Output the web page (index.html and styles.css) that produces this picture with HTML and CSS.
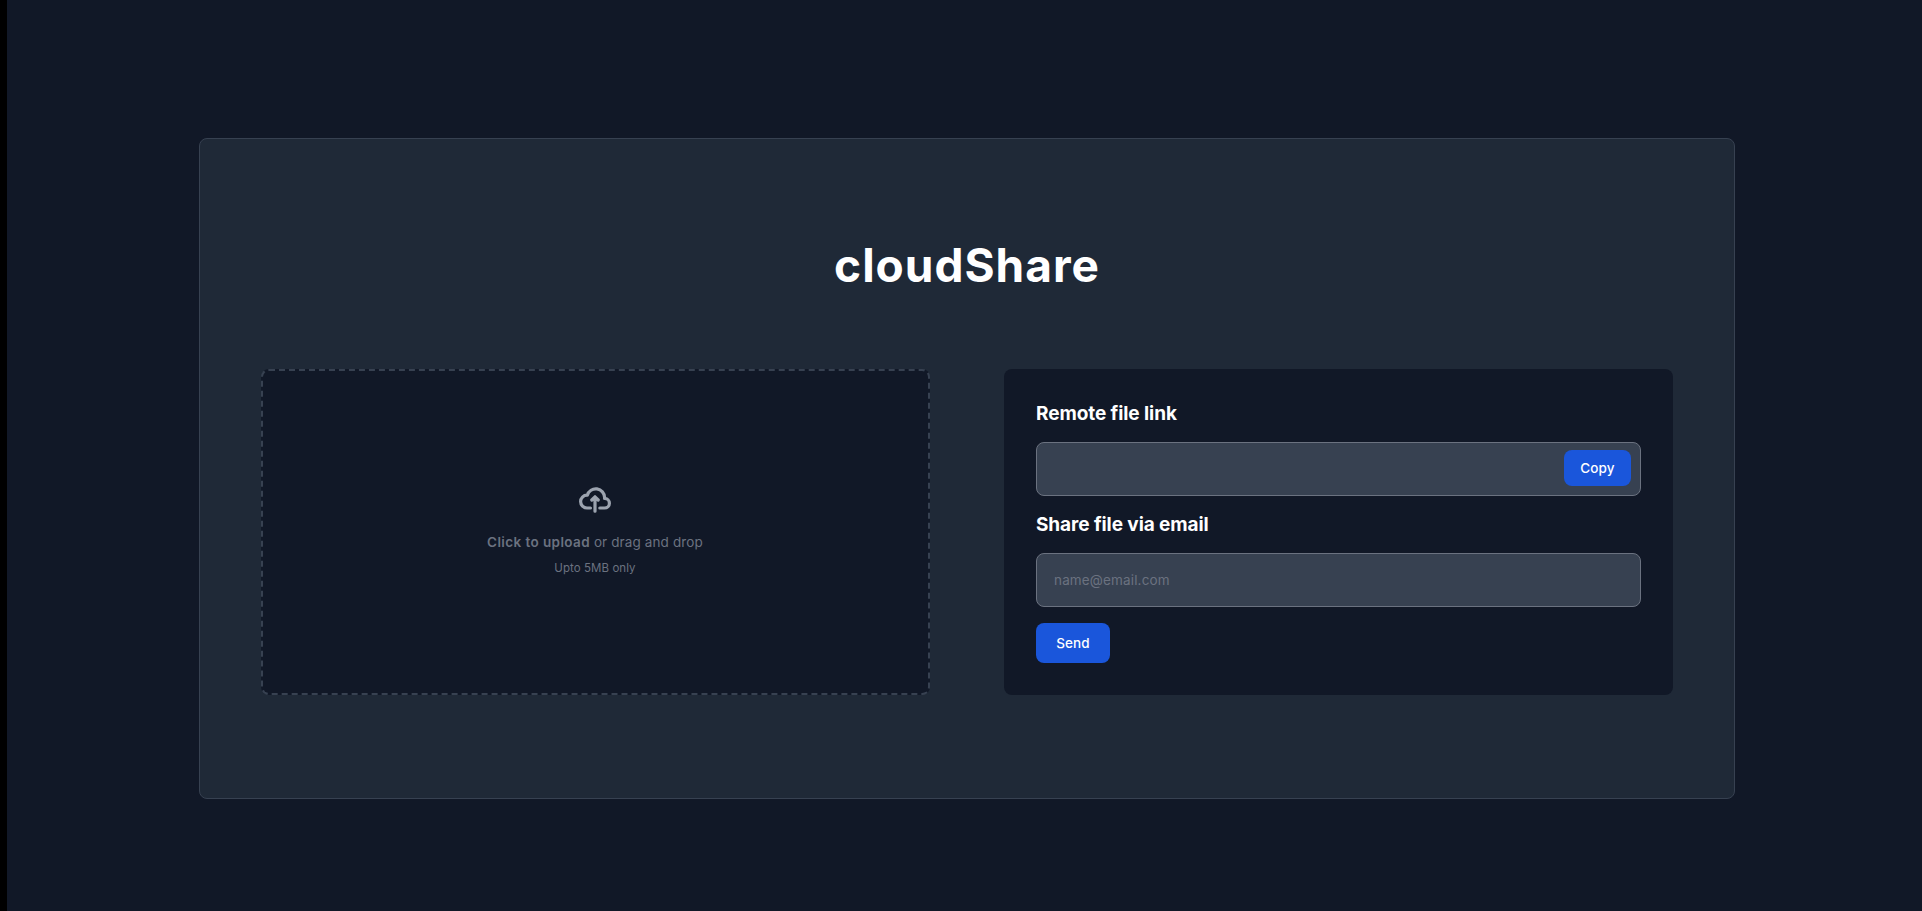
FILE: index.html
```html
<!DOCTYPE html>
<html lang="en">
<head>
<meta charset="utf-8">
<title>cloudShare</title>
<link rel="stylesheet" href="styles.css">
</head>
<body>
<main class="page">
  <section class="card">
    <h1 class="title"><span>cloudShare</span></h1>
    <div class="columns">
      <label class="dropzone">
        <svg class="cloud" viewBox="0 0 20 16" fill="none" stroke="currentColor" stroke-width="2" stroke-linecap="round" stroke-linejoin="round"><path d="M13 13h3a3 3 0 0 0 0-6h-.025A5.56 5.56 0 0 0 16 6.5 5.5 5.5 0 0 0 5.207 5.021C5.137 5.017 5.071 5 5 5a4 4 0 0 0 0 8h2.167M10 15V6m0 0L8 8m2-2 2 2"/></svg>
        <p class="prompt"><span class="strong">Click to upload</span> <span class="rest">or drag and drop</span></p>
        <p class="limit"><span>Upto 5MB only</span></p>
      </label>
      <div class="panel">
        <h2 class="heading"><span class="remote">Remote file link</span></h2>
        <div class="field link"><button class="btn copy"><span>Copy</span></button></div>
        <h2 class="heading"><span class="share">Share file via email</span></h2>
        <div class="field email"><span>name@email.com</span></div>
        <button class="btn send"><span>Send</span></button>
      </div>
    </div>
  </section>
</main>
</body>
</html>
```
FILE: styles.css
```css
* { box-sizing: border-box; margin: 0; }
body {
  background: #111827;
  color: #fff;
  font-family: Inter, "Liberation Sans", sans-serif;
  overflow: hidden;
}
.page { height: 911px; border-left: 7px solid #000; padding: 138px 0 0 192px; }
.card {
  width: 1536px;
  height: 661px;
  padding: 94px 61px 0;
  background: #1f2937;
  border: 1px solid #374151;
  border-radius: 8px;
}
.title {
  height: 136px;
  font-size: 46px;
  line-height: 64px;
  font-weight: 700;
  text-align: center;
  letter-spacing: 1px;
}
.columns { display: grid; grid-template-columns: 669px 669px; justify-content: space-between; height: 326px; }
.dropzone {
  display: flex;
  flex-direction: column;
  align-items: center;
  padding: 113px 1px 0 0;
  background: #111827;
  border: 2px dashed #374151;
  border-radius: 8px;
}
.cloud { width: 32px; height: 32px; margin-bottom: 16px; color: #9ca3af; flex: none; }
.prompt { font-size: 13.5px; line-height: 20px; margin-bottom: 8px; color: #6b7280; white-space: nowrap; }
.strong { font-weight: 600; letter-spacing: 0.4px; }
.rest { letter-spacing: 0.12px; }
.limit { font-size: 11.5px; line-height: 16px; color: #6b7280; letter-spacing: 0.06px; }
.panel { padding: 32px; background: #111827; border-radius: 8px; }
.heading { font-size: 19px; line-height: 25px; font-weight: 700; letter-spacing: -0.08px; margin-bottom: 16px; }
.field {
  display: flex;
  align-items: center;
  height: 54px;
  margin-bottom: 16px;
  background: #374151;
  border: 1px solid #6b7280;
  border-radius: 8px;
}
.link { justify-content: flex-end; padding-right: 9px; }
.email { padding-left: 17px; font-size: 13.5px; color: #6b7280; letter-spacing: 0.15px; }
.btn {
  display: block;
  padding: 0;
  border: 0;
  border-radius: 8px;
  background: #1a56db;
  color: #fff;
  font: 500 13.5px/20px Inter, "Liberation Sans", sans-serif;
  letter-spacing: 0.15px;
}
.copy { width: 67px; height: 36px; margin-bottom: 2px; }
.send { width: 74px; height: 40px; }
```
